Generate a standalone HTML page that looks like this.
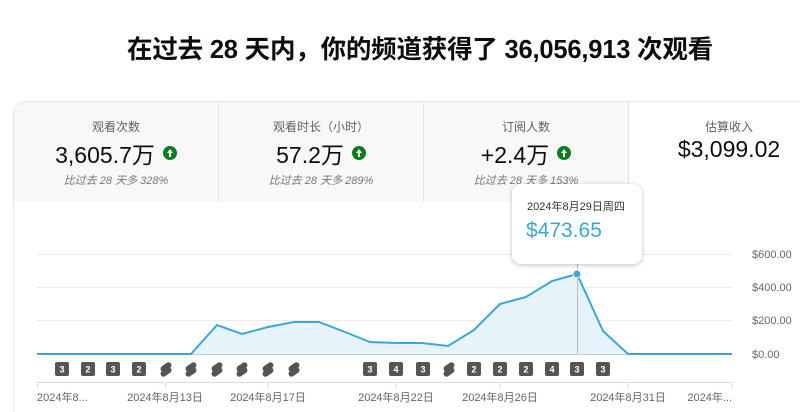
<!DOCTYPE html>
<html><head><meta charset="utf-8"><style>
*{margin:0;padding:0;box-sizing:border-box}
html,body{width:800px;height:412px;overflow:hidden}
body{background:#fff;font-family:"Liberation Sans","Noto Sans CJK SC",sans-serif;position:relative;color:#0d0d0d}
.title{position:absolute;left:0;width:840px;top:29px;text-align:center;font-size:25.5px;font-weight:bold;letter-spacing:-0.2px;white-space:nowrap}
.card{position:absolute;left:13px;top:101px;width:800px;height:311px;border:1px solid #e6e6e6;border-bottom:none;border-radius:12px 0 0 0;overflow:hidden}
.tab{position:absolute;top:0;height:100px;background:#f8f8f8;border-right:1px solid #e6e6e6;text-align:center}
.tab .l{font-size:12px;color:#606060;margin-top:16px}
.tab .v{font-size:23px;margin-top:1px;color:#0d0d0d}
.tab .v i{display:inline-block;width:14px;height:14px;border-radius:50%;background:#0a7d1f;vertical-align:3px;margin-left:8px;position:relative}
.tab .v i:after{content:"";position:absolute;left:4px;top:3px;border-left:3px solid transparent;border-right:3px solid transparent;border-bottom:4px solid #fff}
.tab .v i:before{content:"";position:absolute;left:6px;top:6px;width:2px;height:5px;background:#fff}
.tab .s{font-size:11px;font-style:italic;color:#777;margin-top:2px}
.tip{position:absolute;left:512px;top:184px;width:130px;height:80px;background:#fff;border-radius:9px;box-shadow:0 1px 5px rgba(0,0,0,.25)}
.tip .d{font-size:11px;color:#333;margin:14px 0 0 15px}
.tip .p{font-size:21px;color:#3ea6d6;margin:5px 0 0 14px}
</style></head><body>
<div class="title">在过去 28 天内，你的频道获得了 36,056,913 次观看</div>
<div class="card">
<div class="tab" style="left:0;width:205px"><div class="l">观看次数</div><div class="v">3,605.7万<i></i></div><div class="s">比过去 28 天多 328%</div></div>
<div class="tab" style="left:205px;width:205px"><div class="l">观看时长（小时）</div><div class="v">57.2万<i></i></div><div class="s">比过去 28 天多 289%</div></div>
<div class="tab" style="left:410px;width:205px"><div class="l">订阅人数</div><div class="v">+2.4万<i></i></div><div class="s">比过去 28 天多 153%</div></div>
<div class="tab" style="left:615px;width:200px;background:#fff;border:none"><div class="l">估算收入</div><div class="v">$3,099.02</div></div>
</div>
<svg style="position:absolute;left:0;top:0" width="800" height="412" font-family="Liberation Sans, Noto Sans CJK SC, sans-serif">
<g stroke="#ececec" stroke-width="1">
<line x1="37" y1="254.5" x2="732" y2="254.5"/><line x1="37" y1="287.5" x2="732" y2="287.5"/><line x1="37" y1="320.5" x2="732" y2="320.5"/>
</g>
<line x1="37" y1="354.5" x2="732" y2="354.5" stroke="#ccc"/>
<line x1="37" y1="382.5" x2="732" y2="382.5" stroke="#ddd"/>
<g stroke="#ddd"><line x1="37.5" y1="382" x2="37.5" y2="387"/><line x1="165.5" y1="382" x2="165.5" y2="387"/><line x1="268.5" y1="382" x2="268.5" y2="387"/><line x1="396.5" y1="382" x2="396.5" y2="387"/><line x1="500.5" y1="382" x2="500.5" y2="387"/><line x1="628.5" y1="382" x2="628.5" y2="387"/><line x1="731.5" y1="382" x2="731.5" y2="387"/></g>
<polygon fill="#e6f3fa" points="191,354 217,325 242,334 268,327 294,322 319,322 345,332 370,342 396,343 422,343 448,346 474,330 500,304 526,297 552,281 577,274 603,331 628,354"/>
<line x1="577.5" y1="264" x2="577.5" y2="354" stroke="#bbb"/>
<polyline fill="none" stroke="#3ea6d6" stroke-width="2" points="37,354 191,354 217,325 242,334 268,327 294,322 319,322 345,332 370,342 396,343 422,343 448,346 474,330 500,304 526,297 552,281 577,274 603,331 628,354 732,354"/>
<circle cx="577" cy="274" r="4" fill="#3ea6d6" stroke="#fff" stroke-width="1"/>
<g font-size="11" fill="#666">
<text x="752" y="258">$600.00</text><text x="752" y="291">$400.00</text><text x="752" y="324">$200.00</text><text x="752" y="358">$0.00</text>
<text x="37" y="401">2024年8...</text><text x="165" y="401" text-anchor="middle">2024年8月13日</text><text x="268" y="401" text-anchor="middle">2024年8月17日</text><text x="396" y="401" text-anchor="middle">2024年8月22日</text><text x="500" y="401" text-anchor="middle">2024年8月26日</text><text x="628" y="401" text-anchor="middle">2024年8月31日</text><text x="732" y="401" text-anchor="end">2024年...</text>
</g>
<g font-size="9" font-weight="bold" fill="#fff" text-anchor="middle">
<g fill="#555"><rect x="55" y="362" width="14" height="14" rx="2"/><rect x="81" y="362" width="14" height="14" rx="2"/><rect x="106" y="362" width="14" height="14" rx="2"/><rect x="132" y="362" width="14" height="14" rx="2"/><rect x="363" y="362" width="14" height="14" rx="2"/><rect x="389" y="362" width="14" height="14" rx="2"/><rect x="416" y="362" width="14" height="14" rx="2"/><rect x="467" y="362" width="14" height="14" rx="2"/><rect x="493" y="362" width="14" height="14" rx="2"/><rect x="519" y="362" width="14" height="14" rx="2"/><rect x="545" y="362" width="14" height="14" rx="2"/><rect x="570" y="362" width="14" height="14" rx="2"/><rect x="596" y="362" width="14" height="14" rx="2"/></g>
<text x="62" y="372.5">3</text><text x="88" y="372.5">2</text><text x="113" y="372.5">3</text><text x="139" y="372.5">2</text><text x="370" y="372.5">3</text><text x="396" y="372.5">4</text><text x="423" y="372.5">3</text><text x="474" y="372.5">2</text><text x="500" y="372.5">2</text><text x="526" y="372.5">2</text><text x="552" y="372.5">4</text><text x="577" y="372.5">3</text><text x="603" y="372.5">3</text>
</g>
<g fill="#555">
<g id="sh"><rect x="160" y="364" width="12" height="6" rx="3" transform="rotate(-35 166 367)"/><rect x="160" y="369" width="12" height="6" rx="3" transform="rotate(-35 166 372)"/></g>
<use href="#sh" x="25"/><use href="#sh" x="51"/><use href="#sh" x="76"/><use href="#sh" x="102"/><use href="#sh" x="128"/><use href="#sh" x="283"/>
</g>
</svg>
<div class="tip"><div class="d">2024年8月29日周四</div><div class="p">$473.65</div></div>
</body></html>
